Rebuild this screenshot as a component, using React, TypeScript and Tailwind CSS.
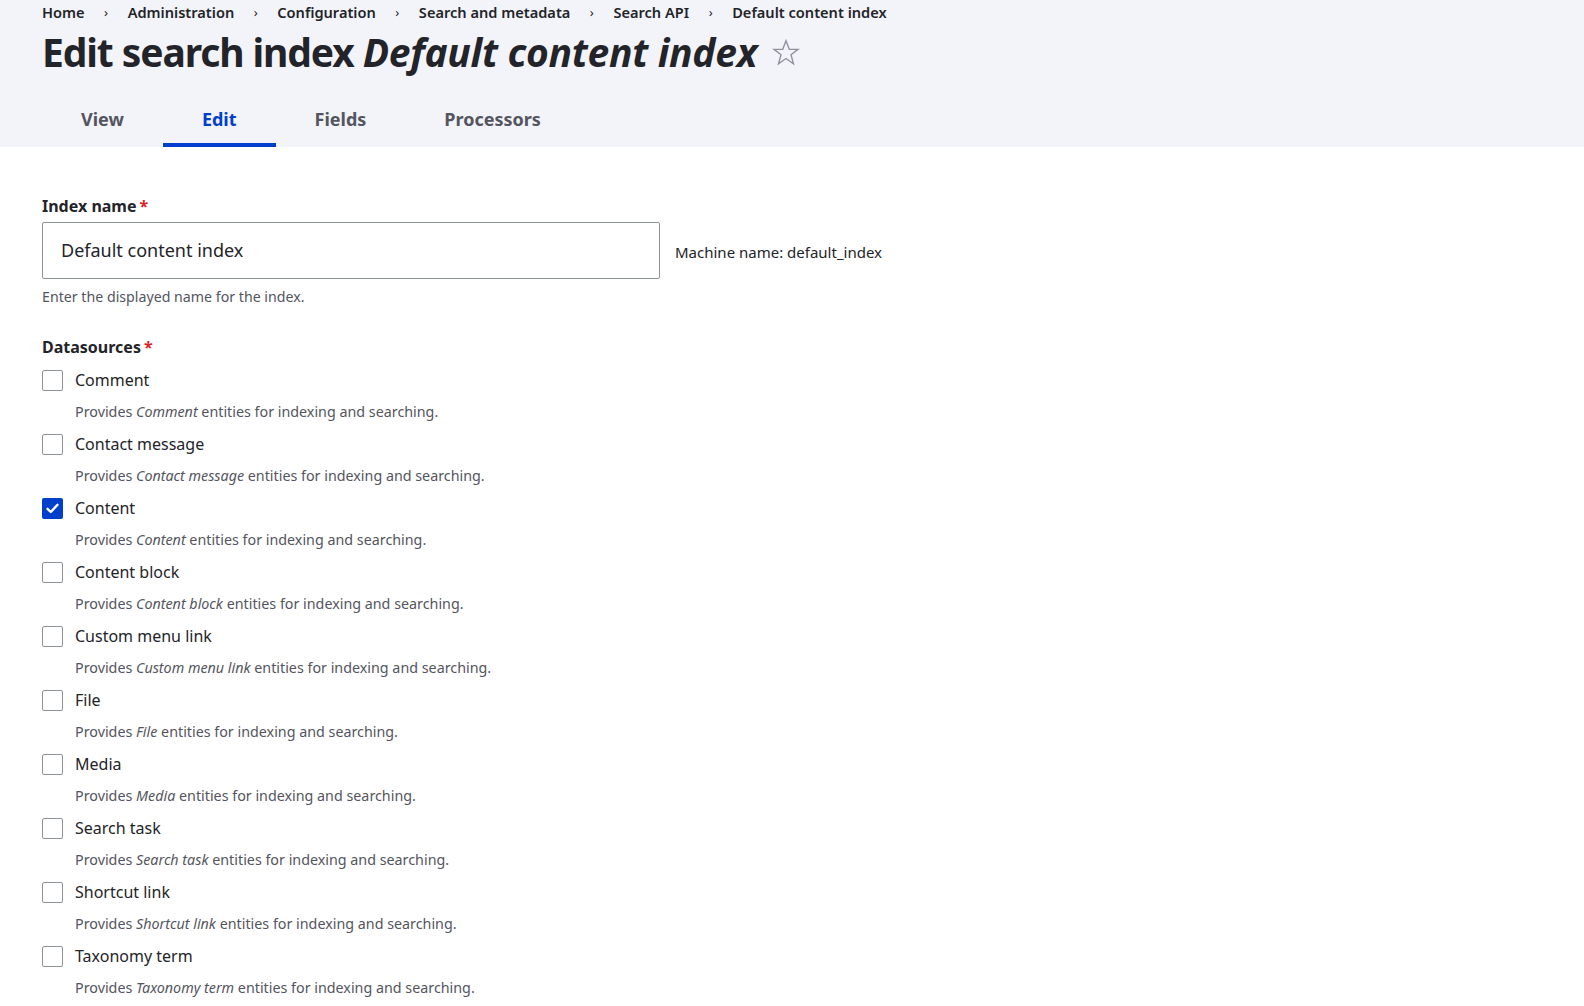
import { Fragment } from 'react';

type Datasource = {
  label: string;
  checked?: boolean;
};

const crumbs = ['Home', 'Administration', 'Configuration', 'Search and metadata', 'Search API', 'Default content index'];

const tabs = [
  { label: 'View' },
  { label: 'Edit', active: true },
  { label: 'Fields' },
  { label: 'Processors' },
];

const datasources: Datasource[] = [
  { label: 'Comment' },
  { label: 'Contact message' },
  { label: 'Content', checked: true },
  { label: 'Content block' },
  { label: 'Custom menu link' },
  { label: 'File' },
  { label: 'Media' },
  { label: 'Search task' },
  { label: 'Shortcut link' },
  { label: 'Taxonomy term' },
];

function Checkbox({ checked }: { checked?: boolean }) {
  if (checked) {
    return (
      <span className="flex h-[21px] w-[21px] shrink-0 items-center justify-center rounded-[2px] bg-[#003ecc]">
        <svg width="13" height="11" viewBox="0 0 13 11" fill="none">
          <path d="M1.5 5.8 L4.8 9 L11.5 1.8" stroke="#fff" strokeWidth="2.4" strokeLinecap="round" strokeLinejoin="round" />
        </svg>
      </span>
    );
  }
  return <span className="block h-[21px] w-[21px] shrink-0 rounded-[2px] border border-[#8e929c] bg-white" />;
}

function StarIcon() {
  return (
    <svg width="30" height="30" viewBox="0 0 24 24" fill="none" className="mt-[2px]">
      <path
        d="M12 2.2 L14.6 9 L21.6 9.1 L16 13.4 L18 20.6 L12 16.4 L6 20.6 L8 13.4 L2.4 9.1 L9.4 9 Z"
        stroke="#8e929c"
        strokeWidth="1.1"
        strokeLinejoin="miter"
      />
    </svg>
  );
}

function Required() {
  return <span className="ml-[3px] text-[#dc2323]">*</span>;
}

export default function App() {
  return (
    <div className="min-h-screen bg-white text-[#232429]" style={{ fontFamily: '"Noto Sans", "Open Sans", sans-serif' }}>
      {/* Header */}
      <header className="bg-[#f3f4f9] px-[42px]">
        <nav className="flex h-[25px] items-center text-[14.6px] font-semibold leading-none text-[#232429]">
          {crumbs.map((c, i) => (
            <Fragment key={c}>
              {i > 0 && <span className="px-[19.5px] text-[13px] font-normal">›</span>}
              <span>{c}</span>
            </Fragment>
          ))}
        </nav>
        <div className="flex h-[53px] items-center gap-[14px]">
          <h1 className="text-[39px] font-bold leading-none">
            <span className="tracking-[-1.1px]">Edit search index </span>
            <em className="italic tracking-[-0.3px]">Default content index</em>
          </h1>
          <StarIcon />
        </div>
        <div className="h-[16px]" />
        <div className="flex">
          {tabs.map((t) => (
            <div
              key={t.label}
              className={
                t.active
                  ? 'relative flex h-[53px] items-center px-[39px] pb-[2px] text-[18px] font-bold text-[#003ecc]'
                  : 'relative flex h-[53px] items-center px-[39px] pb-[2px] text-[18px] font-bold text-[#545560]'
              }
            >
              {t.label}
              {t.active && <span className="absolute bottom-0 left-0 right-0 h-[4px] bg-[#003ecc]" />}
            </div>
          ))}
        </div>
      </header>

      {/* Form */}
      <main className="px-[42px] pt-[48px]">
        <div className="text-[16px] font-bold leading-[22px]">
          Index name
          <Required />
        </div>
        <div className="mt-[5px] flex items-center gap-[15px]">
          <div className="flex h-[57px] w-[618px] shrink-0 items-center rounded-[2px] border border-[#8e929c] px-[18px] text-[18px]">
            Default content index
          </div>
          <span className="mt-[4px] text-[15px]">Machine name: default_index</span>
        </div>
        <p className="mt-[8px] text-[14.2px] leading-[20px] text-[#545560]">Enter the displayed name for the index.</p>

        <div className="mt-[29px] text-[16px] font-bold leading-[22px]">
          Datasources
          <Required />
        </div>
        <div className="mt-[11px] flex flex-col">
          {datasources.map((d) => (
            <div key={d.label} className="h-[64px]">
              <label className="flex h-[22px] items-center gap-[12px] text-[16px]">
                <Checkbox checked={d.checked} />
                <span>{d.label}</span>
              </label>
              <p className="mt-[11px] pl-[33px] text-[14.3px] leading-[20px] text-[#545560]">
                Provides <em className="italic">{d.label}</em> entities for indexing and searching.
              </p>
            </div>
          ))}
        </div>
      </main>
    </div>
  );
}
